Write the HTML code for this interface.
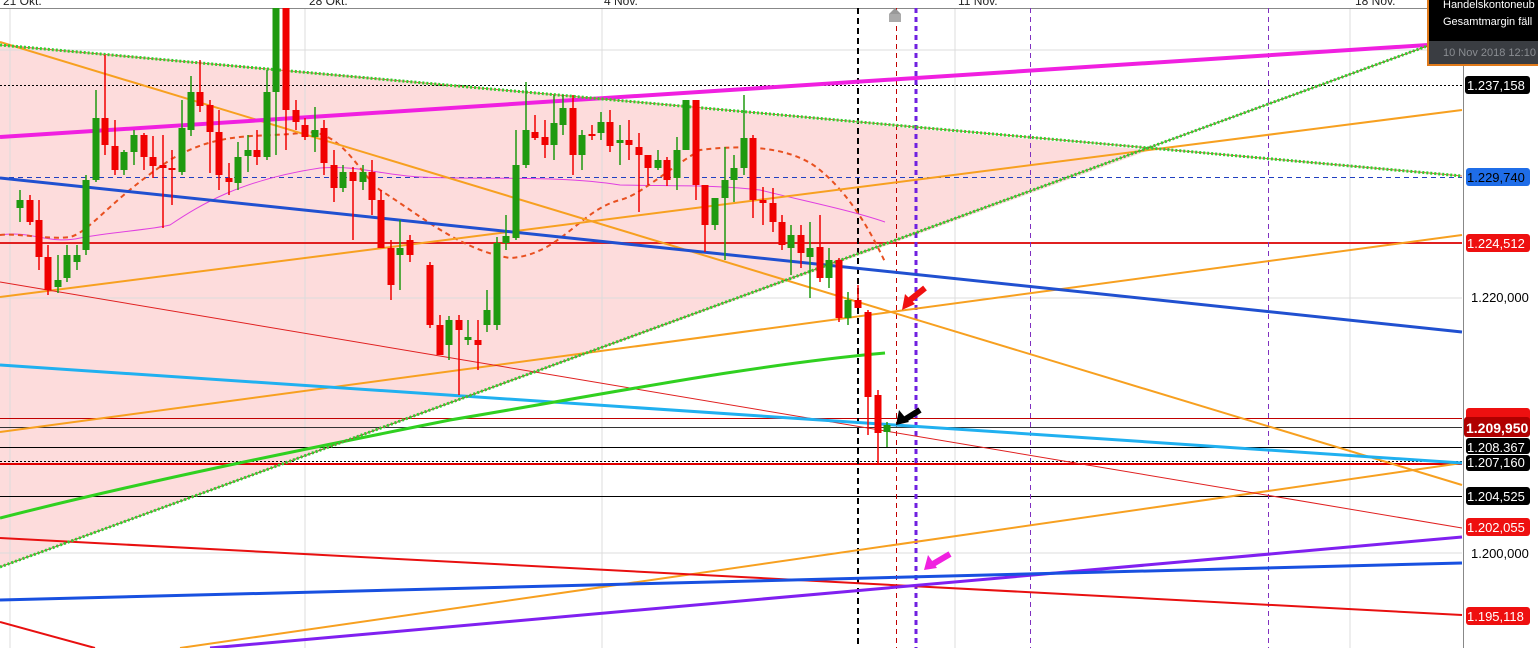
<!DOCTYPE html>
<html><head><meta charset="utf-8"><style>
html,body{margin:0;padding:0;background:#fff;width:1538px;height:648px;overflow:hidden;font-family:"Liberation Sans",sans-serif}
svg{display:block}
</style></head><body>
<svg id="c" width="1538" height="648" viewBox="0 0 1538 648" xmlns="http://www.w3.org/2000/svg" font-family="Liberation Sans, sans-serif">
<rect width="1538" height="648" fill="#fff"/>
<polygon points="0,45 1150,150 0,567" fill="#fddcdc"/>
<g stroke="#dcdcdc" stroke-width="1">
<line x1="0" y1="50" x2="1462" y2="50"/><line x1="0" y1="298" x2="1462" y2="298"/><line x1="0" y1="553" x2="1462" y2="553"/>
<line x1="10" y1="8" x2="10" y2="648"/><line x1="305" y1="8" x2="305" y2="648"/><line x1="602" y1="8" x2="602" y2="648"/><line x1="955" y1="8" x2="955" y2="648"/><line x1="1350" y1="8" x2="1350" y2="648"/>
</g>
<line x1="0" y1="8.5" x2="1462" y2="8.5" stroke="#888"/>
<g font-size="12" fill="#222">
<text x="3" y="5">21 Okt.</text><text x="309" y="5">28 Okt.</text><text x="604" y="5">4 Nov.</text><text x="958" y="5">11 Nov.</text><text x="1355" y="5">18 Nov.</text>
</g>
<line x1="0" y1="85.5" x2="1462" y2="85.5" stroke="#000" stroke-dasharray="2,2"/>
<line x1="0" y1="177.5" x2="1462" y2="177.5" stroke="#2040c0" stroke-dasharray="5,4"/>
<line x1="0" y1="243" x2="1462" y2="243" stroke="#e02020" stroke-width="2"/>
<line x1="0" y1="418.5" x2="1462" y2="418.5" stroke="#c00000"/>
<line x1="0" y1="427.5" x2="1462" y2="427.5" stroke="#333"/>
<line x1="0" y1="447.5" x2="1462" y2="447.5" stroke="#000"/>
<line x1="0" y1="461.5" x2="1462" y2="461.5" stroke="#000" stroke-dasharray="2,2"/>
<line x1="0" y1="464" x2="1462" y2="464" stroke="#e00000" stroke-width="2"/>
<line x1="0" y1="496.5" x2="1462" y2="496.5" stroke="#000"/>
<line x1="858" y1="8" x2="858" y2="648" stroke="#000" stroke-width="2" stroke-dasharray="6,4"/>
<line x1="896.5" y1="8" x2="896.5" y2="648" stroke="#c00000" stroke-dasharray="5,4"/>
<line x1="916" y1="8" x2="916" y2="648" stroke="#7020e0" stroke-width="3" stroke-dasharray="5,4"/>
<line x1="1030.5" y1="8" x2="1030.5" y2="648" stroke="#8030c0" stroke-dasharray="5,4"/>
<line x1="1268.5" y1="8" x2="1268.5" y2="648" stroke="#8030c0" stroke-dasharray="5,4"/>
<path d="M0,235 C30,230 50,245 80,238 C110,232 150,230 170,225 C200,205 240,180 320,168 C360,165 380,175 420,177 C480,180 560,175 620,185 C680,186 720,185 760,190 C800,200 850,210 885,222" fill="none" stroke="#e040e0" stroke-width="1"/>
<path d="M0,235 C20,233 50,240 70,237 C90,232 110,200 170,160 C220,130 260,138 300,133 C340,125 360,175 380,190 C420,215 460,250 510,258 C560,255 580,210 620,200 C640,195 660,175 700,150 C740,145 790,145 820,170 C850,195 870,230 885,262" fill="none" stroke="#e85020" stroke-width="2" stroke-dasharray="5,4"/>
<line x1="0" y1="42" x2="1462" y2="485" stroke="#f7a020" stroke-width="2"/>
<line x1="0" y1="297" x2="1462" y2="110" stroke="#f7a020" stroke-width="2"/>
<line x1="0" y1="432" x2="1462" y2="235" stroke="#f7a020" stroke-width="2"/>
<line x1="180" y1="648" x2="1462" y2="463" stroke="#f7a020" stroke-width="2"/>
<line x1="0" y1="282" x2="1462" y2="528" stroke="#e02020" stroke-width="1"/>
<line x1="0" y1="365" x2="1462" y2="463" stroke="#20b0f0" stroke-width="3"/>
<line x1="0" y1="178" x2="1462" y2="332" stroke="#2050d0" stroke-width="3"/>
<line x1="0" y1="137" x2="1428" y2="45" stroke="#f020e0" stroke-width="4"/>
<path d="M0,518 C150,480 300,450 450,420 C600,395 750,365 885,353" fill="none" stroke="#30d020" stroke-width="3"/>
<line x1="0" y1="538" x2="1462" y2="615" stroke="#e81010" stroke-width="2"/>
<line x1="0" y1="622" x2="95" y2="648" stroke="#e81010" stroke-width="2"/>
<line x1="210" y1="648" x2="1462" y2="537" stroke="#8020f0" stroke-width="3"/>
<line x1="0" y1="600" x2="1462" y2="563" stroke="#1850e0" stroke-width="3"/>
<line x1="0" y1="45" x2="1462" y2="176" stroke="#e06040" stroke-width="1"/>
<line x1="0" y1="45" x2="1462" y2="176" stroke="#30d030" stroke-width="3" stroke-dasharray="2,2"/>
<line x1="0" y1="567" x2="1430" y2="45" stroke="#a05030" stroke-width="1"/>
<line x1="0" y1="567" x2="1430" y2="45" stroke="#30d030" stroke-width="3" stroke-dasharray="2,2"/>
<g id="candles"></g>
<g>
<line x1="925" y1="288" x2="910" y2="300" stroke="#f01010" stroke-width="6"/><polygon points="902,310 905,294 915,304" fill="#f01010"/>
<line x1="920" y1="410" x2="904" y2="420" stroke="#000" stroke-width="6"/><polygon points="896,425 899,410 909,422" fill="#000"/>
<line x1="950" y1="554" x2="933" y2="564" stroke="#f020e0" stroke-width="6"/><polygon points="924,570 928,555 937,568" fill="#f020e0"/>
</g>
<polygon points="889,14 895,8 901,14" fill="#999"/><rect x="889" y="14" width="12" height="8" fill="#aaa"/>
<rect x="1463" y="0" width="75" height="648" fill="#fff"/>
<line x1="1463.5" y1="0" x2="1463.5" y2="648" stroke="#888"/>
<g font-size="13">
<rect x="1465" y="76" width="65" height="18" rx="3" fill="#000"/><text x="1467" y="90" fill="#fff">1.237,158</text>
<rect x="1466" y="168" width="64" height="18" rx="3" fill="#1f6de8"/><text x="1467" y="182" fill="#000">1.229,740</text>
<rect x="1466" y="234" width="64" height="18" rx="3" fill="#ee1010"/><text x="1467" y="248" fill="#fff">1.224,512</text>
<text x="1471" y="302" fill="#000">1.220,000</text>
<rect x="1466" y="408" width="64" height="14" rx="3" fill="#ee1010"/>
<rect x="1464" y="417" width="66" height="20" rx="3" fill="#b00000"/><text x="1466" y="433" fill="#fff" font-weight="bold" font-size="14">1.209,950</text>
<rect x="1466" y="438" width="64" height="16" rx="3" fill="#000"/><text x="1467" y="452" fill="#fff">1.208.367</text>
<rect x="1466" y="455" width="64" height="16" rx="3" fill="#000"/><text x="1467" y="467" fill="#fff">1.207,160</text>
<rect x="1466" y="487" width="64" height="18" rx="3" fill="#000"/><text x="1467" y="501" fill="#fff">1.204,525</text>
<rect x="1466" y="518" width="64" height="18" rx="3" fill="#ee1010"/><text x="1467" y="532" fill="#fff">1.202,055</text>
<text x="1471" y="558" fill="#000">1.200,000</text>
<rect x="1466" y="607" width="64" height="18" rx="3" fill="#ee1010"/><text x="1467" y="621" fill="#fff">1.195,118</text>
</g>
<rect x="1428" y="-2" width="112" height="67" fill="#000" stroke="#e07a1a" stroke-width="2"/>
<rect x="1429" y="41" width="110" height="23" fill="#3a3d42"/>
<text x="1443" y="8" font-size="11" fill="#fff">Handelskontoneub</text>
<text x="1443" y="25" font-size="11" fill="#fff">Gesamtmargin fäll</text>
<text x="1443" y="56" font-size="11" fill="#8a8d92">10 Nov 2018 12:10</text>
</svg>
<script>
var d=[[20,'g',200,208,190,222],[30,'r',200,222,195,225],[39,'r',220,257,200,270],[48,'r',257,290,245,295],[58,'g',280,287,255,293],[67,'g',255,278,245,282],[77,'g',255,262,245,270],[86,'g',180,250,175,255],[96,'g',118,180,90,182],[105,'r',118,145,55,155],[115,'r',146,170,120,175],[124,'g',152,170,150,175],[134,'g',135,152,130,165],[144,'r',135,157,133,170],[153,'r',157,166,136,178],[163,'r',165,168,135,228],[172,'r',168,170,150,205],[182,'g',128,172,100,175],[191,'g',92,130,76,136],[200,'r',92,106,60,112],[210,'r',105,132,100,173],[219,'r',132,175,110,190],[229,'r',178,182,163,195],[238,'g',157,183,142,190],[248,'g',150,156,135,172],[257,'r',150,157,130,165],[267,'g',92,157,70,160],[276,'g',8,92,8,155],[286,'r',8,110,8,150],[296,'r',110,122,100,130],[305,'r',125,137,118,140],[315,'g',130,137,107,152],[324,'r',128,163,120,175],[334,'r',165,188,150,202],[343,'g',172,188,165,192],[353,'r',172,181,167,240],[363,'g',172,182,165,190],[372,'r',172,200,160,215],[381,'r',200,248,190,248],[391,'r',248,285,240,300],[400,'g',248,255,220,290],[410,'r',240,255,235,262],[430,'r',265,325,262,328],[440,'r',325,355,315,355],[449,'g',320,345,316,360],[459,'r',320,330,315,395],[468,'g',337,340,320,345],[478,'r',340,345,320,370],[487,'g',310,325,290,332],[497,'g',243,325,237,330],[506,'g',236,243,215,250],[516,'g',165,238,130,240],[526,'g',130,165,82,168],[535,'r',132,138,115,140],[545,'r',137,145,120,158],[554,'g',123,145,95,160],[563,'g',108,125,95,135],[573,'r',108,155,95,175],[582,'g',135,155,130,170],[592,'r',134,136,125,140],[601,'g',122,133,112,140],[610,'r',122,146,110,152],[620,'g',140,143,125,165],[629,'r',140,145,120,160],[639,'r',147,155,133,212],[648,'r',155,168,155,185],[658,'g',160,168,150,170],[667,'r',160,180,157,186],[677,'g',150,178,137,190],[686,'g',100,150,100,150],[696,'r',100,185,100,200],[705,'r',185,225,185,252],[715,'g',198,225,198,230],[725,'g',180,198,147,260],[734,'g',168,180,155,202],[744,'g',138,168,95,175],[753,'r',138,200,135,218],[763,'r',200,203,187,225],[773,'r',203,222,188,232],[782,'r',222,245,215,250],[791,'g',235,248,225,275],[801,'r',235,253,225,268],[810,'g',248,257,222,298],[820,'r',247,278,215,282],[829,'g',260,278,248,288],[839,'r',260,318,258,322],[848,'g',300,318,292,325],[858,'r',300,308,285,305],[868,'r',312,397,310,435],[878,'r',395,433,390,465],[887,'g',425,432,422,447]];
var s='';d.forEach(function(c){var col=c[1]=='g'?'#1f9a10':'#f00000';s+='<line x1="'+c[0]+'" y1="'+c[4]+'" x2="'+c[0]+'" y2="'+c[5]+'" stroke="'+col+'" stroke-width="1.5"/><rect x="'+(c[0]-3.5)+'" y="'+c[2]+'" width="7" height="'+Math.max(2,c[3]-c[2])+'" fill="'+col+'"/>';});
document.getElementById('candles').innerHTML=s;
</script>
</body></html>
